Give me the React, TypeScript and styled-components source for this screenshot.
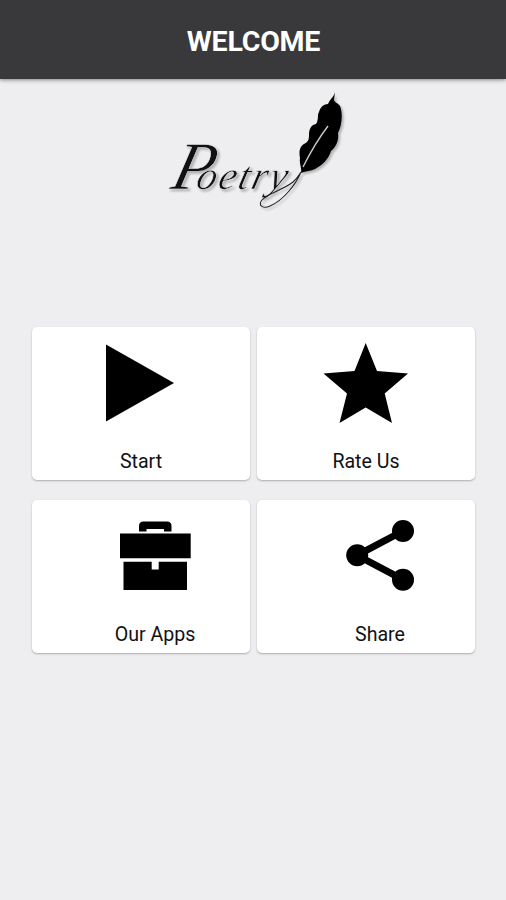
import React from "react";
import styled, { createGlobalStyle } from "styled-components";

const GlobalStyle = createGlobalStyle`
  * { box-sizing: border-box; }
  body { margin: 0; background: #eeeef0; font-family: Roboto, sans-serif; }
`;

const Screen = styled.main`
  display: flex;
  flex-direction: column;
  align-items: center;
  width: 506px;
  height: 900px;
  background: #eeeef0;
  overflow: hidden;
`;

const Header = styled.header`
  display: flex;
  flex: none;
  align-items: center;
  justify-content: center;
  width: 100%;
  height: 79px;
  padding: 4px 0 0 1px;
  background: #39393b;
  box-shadow: 0 1px 4px rgba(0, 0, 0, 0.45);
`;

const Title = styled.h1`
  margin: 0;
  color: #fff;
  font-size: 28.5px;
  line-height: 32px;
  font-weight: 700;
  letter-spacing: -0.2px;
`;

const Logo = styled.svg`
  flex: none;
  width: 190px;
  height: 130px;
  margin: 6px 0 112px 4px;
  filter: drop-shadow(2px 2px 1px rgba(0, 0, 0, 0.25));
`;

const Script = styled.text`
  font-family: "Liberation Serif", serif;
  font-style: italic;
  fill: #111;
  stroke: #eeeef0;
  stroke-width: 0.5px;
`;

const Menu = styled.nav`
  display: grid;
  grid-template-columns: 218px 218px;
  grid-auto-rows: 153px;
  gap: 20px 7px;
  padding-left: 1px;
`;

const Card = styled.button<{ $indent?: number }>`
  display: flex;
  flex-direction: column;
  align-items: center;
  padding: 10px 0 0 ${(p) => p.$indent ?? 0}px;
  border: 0;
  border-radius: 5px;
  background: #fff;
  box-shadow: 0 1px 2px rgba(0, 0, 0, 0.28);
  font-family: inherit;
`;

const Icon = styled.svg`
  flex: none;
  width: 100px;
  height: 90px;
`;

const Label = styled.span`
  margin-top: 23px;
  color: #111;
  font-size: 19.6px;
  line-height: 24px;
  white-space: nowrap;
`;

const PlayIcon = () => (
  <Icon viewBox="91 337 100 90">
    <path d="M106 344.5 174 383 106 421.5Z" />
  </Icon>
);

const StarIcon = () => (
  <Icon viewBox="316 337 100 90">
    <path d="M365.7 343 377 371 408 373.5 384.7 393.5 392 423 365.7 407.5 339.5 423 347 393.5 323.5 373.5 354.5 371Z" />
  </Icon>
);

const BriefcaseIcon = () => (
  <Icon viewBox="105 510 100 90">
    <path d="M139 531.5V526q0-4.500 4.500-4.500H167q4.500 0 4.500 4.500v5.500H164V529H146.500v2.500Z" />
    <path d="M120 533.500H190.700V558.300H120ZM123.500 561.700H151.700V569.500H158.700V561.700H187V590H123.500Z" />
  </Icon>
);

const ShareIcon = () => (
  <Icon viewBox="330 510 100 90">
    <path d="M403 531 357 555.300 403 579.700" fill="none" stroke="#000" strokeWidth="7" />
    <circle cx="403" cy="531" r="11" />
    <circle cx="357.200" cy="555.300" r="11" />
    <circle cx="403" cy="579.700" r="11" />
  </Icon>
);

const PoetryLogo = () => (
  <Logo viewBox="160 85 190 130">
    <Script transform="translate(169 189) skewX(-14)">
      <tspan fontSize="68">P</tspan>
      <tspan fontSize="40" dx="-16" letterSpacing="2">oetry</tspan>
    </Script>
    <path d="M335 92C334 97 330 99 328 104C323 104 320 108 319 112C317 115 319 120 316 124C311 125 309 129 309 135C309 140 308 142 304 144C299 147 299 153 300 158C299 164 302 168 301 173C306 171 311 171 315 169C323 165 329 158 331 151C337 146 339 139 338 133C342 126 343 113 340 106C338 103 335 103 334 100Z" />
    <path d="M328 126Q315 143 303 167" fill="none" stroke="#c8c8c8" strokeWidth="1.400" />
    <path d="M301 172C296 184 284 200 270 206C264 209 257 206 262 200C268 193 283 190 293 182C297 179 299 175 301 172" fill="none" stroke="#222" strokeWidth="1.100" />
  </Logo>
);

export default function App() {
  return (
    <>
      <GlobalStyle />
      <Screen>
        <Header><Title>WELCOME</Title></Header>
        <PoetryLogo />
        <Menu>
          <Card><PlayIcon /><Label>Start</Label></Card>
          <Card><StarIcon /><Label>Rate Us</Label></Card>
          <Card $indent={28}><BriefcaseIcon /><Label>Our Apps</Label></Card>
          <Card $indent={28}><ShareIcon /><Label>Share</Label></Card>
        </Menu>
      </Screen>
    </>
  );
}
